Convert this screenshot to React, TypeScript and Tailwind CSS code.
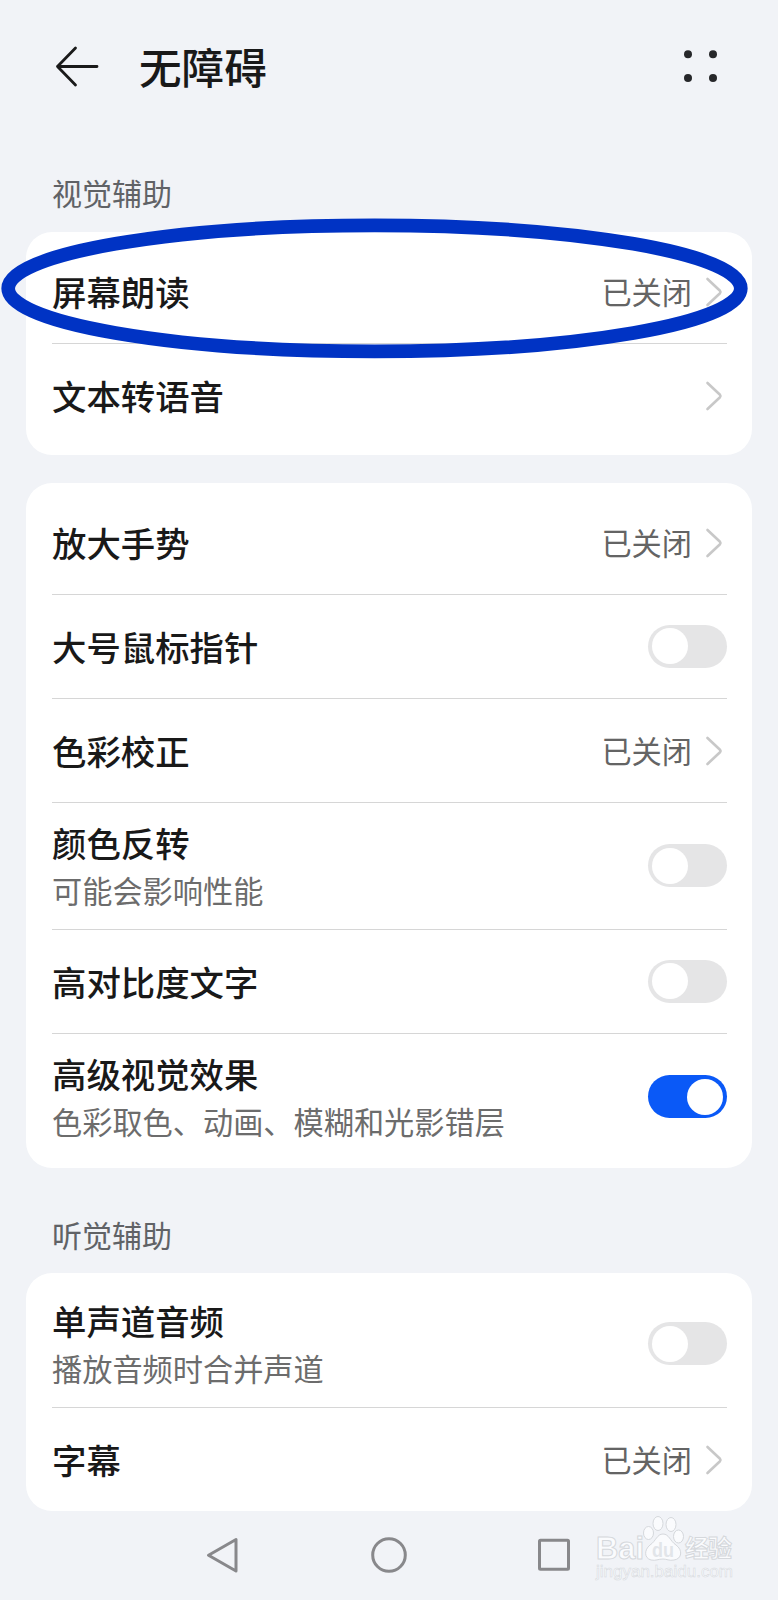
import React, { useState } from 'react';

interface Item {
  title: string;
  desc?: string;
  value?: string;
  toggle?: boolean;
  on?: boolean;
}

const vision: Item[] = [
  { title: '屏幕朗读', value: '已关闭' },
  { title: '文本转语音' },
];

const display: Item[] = [
  { title: '放大手势', value: '已关闭' },
  { title: '大号鼠标指针', toggle: true },
  { title: '色彩校正', value: '已关闭' },
  { title: '颜色反转', desc: '可能会影响性能', toggle: true },
  { title: '高对比度文字', toggle: true },
  { title: '高级视觉效果', desc: '色彩取色、动画、模糊和光影错层', toggle: true, on: true },
];

const hearing: Item[] = [
  { title: '单声道音频', desc: '播放音频时合并声道', toggle: true },
  { title: '字幕', value: '已关闭' },
];

const Toggle: React.FC<{ initial?: boolean }> = ({ initial = false }) => {
  const [on, setOn] = useState(initial);
  return (
    <button
      onClick={() => setOn(!on)}
      className={`mb-px flex h-[43px] w-[79px] items-center rounded-full px-1 ${on ? 'justify-end bg-[#0a59f7]' : 'justify-start bg-[#e5e5e6]'}`}
    >
      <span className="h-9 w-9 rounded-full bg-white" />
    </button>
  );
};

const Chevron = () => (
  <svg className="mr-1 ml-[13px] h-8 w-[18px]" viewBox="0 0 18 32" fill="none" stroke="#c8c8c8" strokeWidth="2.6" strokeLinecap="round" strokeLinejoin="round">
    <path d="M2.5 3 L15 14.8 Q16 16 15 17.2 L2.5 29" />
  </svg>
);

const Row: React.FC<{ item: Item }> = ({ item }) => (
  <div className={`flex items-center justify-between border-b border-[#d6d6d6] last:border-0 ${item.desc ? 'h-[127px] last:h-[126px]' : 'h-[104px] last:h-[103px]'}`}>
    <div className={item.desc ? 'pt-0.5' : 'pb-px'}>
      <div className="text-[34.4px] leading-[47px] font-medium text-[#191919]">{item.title}</div>
      {item.desc && <div className="text-[30.2px] leading-[49px] text-[#6c6c6c]">{item.desc}</div>}
    </div>
    {item.toggle ? (
      <Toggle initial={item.on} />
    ) : (
      <div className="flex items-center">
        {item.value && <span className="pb-0.5 text-[30.2px] leading-10 text-[#646464]">{item.value}</span>}
        <Chevron />
      </div>
    )}
  </div>
);

const Card: React.FC<{ items: Item[]; className?: string }> = ({ items, className = 'pb-2' }) => (
  <div className={`mx-[26px] rounded-[26px] bg-white pt-2 pr-[25px] pl-[26px] ${className}`}>
    {items.map(item => <Row key={item.title} item={item} />)}
  </div>
);

const Watermark = () => (
  <svg className="absolute top-[1510px] left-[590px]" width="150" height="80" viewBox="0 0 150 80" fill="#fafbfd" stroke="#d5d8dc" strokeWidth="1">
    <text x="6" y="49" fontSize="31" fontWeight="700" textLength="48" lengthAdjust="spacingAndGlyphs" fontFamily="Liberation Sans, sans-serif">Bai</text>
    <ellipse cx="58.5" cy="23" rx="5" ry="6.5" />
    <ellipse cx="68" cy="13.5" rx="5" ry="7" />
    <ellipse cx="81" cy="14.5" rx="5" ry="7" />
    <ellipse cx="88.5" cy="26.5" rx="5" ry="6.5" />
    <path d="M73 24 C79 24 80 31 86 35 C93 40 92 49 84 50 C79 51 77 49 73 49 C68 49 66 51 61 50 C54 48 54 40 60 35 C66 31 67 24 73 24 Z" />
    <text x="62" y="47" fontSize="20" fontWeight="700" fill="#e2e5e9" stroke="none" textLength="22" lengthAdjust="spacingAndGlyphs" fontFamily="Liberation Sans, sans-serif">du</text>
    <text x="95" y="47" fontSize="24" fontWeight="700" textLength="47" fontFamily="Noto Sans CJK SC, sans-serif">经验</text>
    <text x="6" y="67" fontSize="16" strokeWidth="0.5" textLength="137" lengthAdjust="spacingAndGlyphs" fontFamily="Liberation Sans, sans-serif">jingyan.baidu.com</text>
  </svg>
);

const App: React.FC = () => {
  return (
    <div className="relative flex h-[1600px] w-[778px] flex-col overflow-hidden bg-[#f1f3f7] font-['Noto_Sans_CJK_SC',sans-serif]">
      {/* Header */}
      <header className="flex h-[136px] items-center pr-[61px] pl-[55px]">
        <svg className="h-11 w-11" viewBox="0 0 44 44" fill="none" stroke="#1a1a1a" strokeWidth="2.8" strokeLinecap="round" strokeLinejoin="round">
          <path d="M42 20.5 H2.5 M20.5 2 L2.5 20.5 L20.5 39" />
        </svg>
        <h1 className="ml-10 flex-1 pb-1 text-[42.6px] leading-[60px] font-medium text-[#191919]">无障碍</h1>
        <svg className="h-[34px] w-[34px] overflow-visible" viewBox="0 0 34 34" fill="#26272a">
          <circle cx="5" cy="3.2" r="4" />
          <circle cx="30" cy="3.2" r="4" />
          <circle cx="5" cy="27" r="4" />
          <circle cx="30" cy="27" r="4" />
        </svg>
      </header>

      <h2 className="mt-[35px] mb-[19px] ml-[52px] text-[30px] leading-[42px] text-[#606266]">视觉辅助</h2>
      <Card items={vision} />
      <div className="h-7" />
      <Card items={display} />
      <h2 className="mt-[45px] mb-[18px] ml-[52px] text-[30px] leading-[42px] text-[#606266]">听觉辅助</h2>
      <Card items={hearing} className="pb-0" />

      {/* System navigation */}
      <nav className="mt-auto flex h-[89px] items-center justify-between pr-[207px] pl-[205px]">
        <svg width="36" height="40" viewBox="0 0 36 40" fill="none" stroke="#88888b" strokeWidth="3" strokeLinejoin="round">
          <path d="M31 3.5 V35 L3.5 19.2 Z" />
        </svg>
        <svg width="40" height="40" viewBox="0 0 40 40" fill="none" stroke="#88888b" strokeWidth="3">
          <circle cx="21" cy="19" r="16.3" />
        </svg>
        <svg width="36" height="40" viewBox="0 0 36 40" fill="none" stroke="#88888b" strokeWidth="3">
          <rect x="4.5" y="4.3" width="29" height="29" rx="1" />
        </svg>
      </nav>
      <Watermark />

      {/* Highlight ring */}
      <svg className="pointer-events-none absolute top-[210px] left-0" width="760" height="156" viewBox="0 0 760 156" fill="none">
        <ellipse cx="374.5" cy="78.4" rx="366.3" ry="63" stroke="#0033c4" strokeWidth="13.7" />
      </svg>
    </div>
  );
};

export default App;
